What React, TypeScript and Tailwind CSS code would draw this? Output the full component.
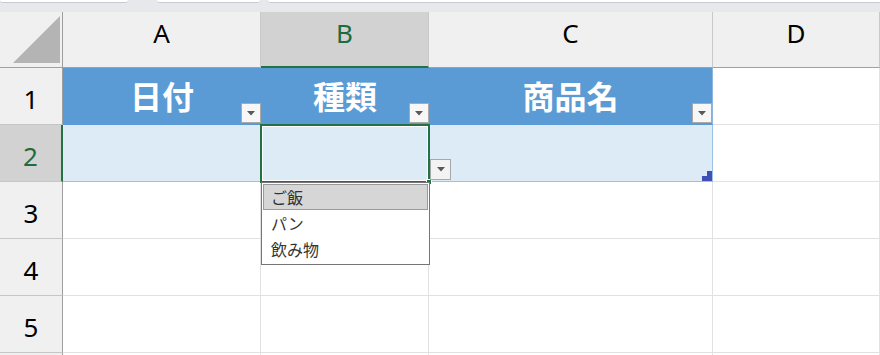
import React from "react";

const jp = '"Noto Sans CJK JP", "Noto Sans", sans-serif';
const latin = '"Noto Sans", "Liberation Sans", sans-serif';

function FilterButton({ className = "" }: { className?: string }) {
  return (
    <div
      className={`absolute w-[20px] h-[20px] bg-[#f7f7f7] border border-[#a9a9a9] flex items-center justify-center ${className}`}
    >
      <svg width="8" height="5" viewBox="0 0 8 5">
        <polygon points="0,0 8,0 4,4.5" fill="#595959" />
      </svg>
    </div>
  );
}

function ColHeader({ label, active = false }: { label: string; active?: boolean }) {
  return (
    <div
      className={`flex items-start justify-center pt-[2px] text-[26px] border-r border-[#c9c9c9] ${
        active
          ? "bg-[#d2d2d2] text-[#1e6b40] border-b-2 border-b-[#217346]"
          : "bg-[#f0f0f0] text-black border-b border-b-[#a0a0a0]"
      }`}
      style={{ fontFamily: latin }}
    >
      {label}
    </div>
  );
}

function RowHeader({ n, active = false }: { n?: number; active?: boolean }) {
  return (
    <div
      className={`flex items-center justify-center pt-[6px] text-[26px] border-b border-b-[#c6c6c6] ${
        active
          ? "bg-[#d2d2d2] text-[#1e6b40] border-r-2 border-r-[#217346]"
          : "bg-[#f0f0f0] text-black border-r border-r-[#9e9e9e]"
      }`}
      style={{ fontFamily: latin }}
    >
      {n}
    </div>
  );
}

function Blank() {
  return <div className="bg-white border-r border-b border-[#e1e1e1]" />;
}

function TitleCell({ text, last = false }: { text: string; last?: boolean }) {
  return (
    <div
      className={`relative bg-[#5b9bd5] flex items-center justify-center text-white font-bold text-[32px] border-b border-b-[#5b9bd5] ${
        last ? "border-r border-r-[#8fb6e0]" : ""
      }`}
      style={{ fontFamily: jp }}
    >
      <span className="-mt-[3px]">{text}</span>
      <FilterButton className="right-0 bottom-[1px]" />
    </div>
  );
}

const options = ["ご飯", "パン", "飲み物"];

export default function App() {
  return (
    <div className="w-[880px] h-[355px] overflow-hidden bg-white" style={{ fontFamily: jp }}>
      {/* タブ帯 */}
      <div className="h-[12px] bg-[#e6e8ec] flex gap-[8px] items-start">
        <div className="w-[128px] h-[3px] bg-white rounded-b-[3px] border-b border-[#c9cbd0]" />
        <div className="w-[103px] h-[3px] ml-[21px] bg-white rounded-b-[3px] border-b border-[#c9cbd0]" />
        <div className="flex-1 h-[3px] bg-white rounded-bl-[3px] border-b border-[#c9cbd0]" />
      </div>

      <div className="grid grid-cols-[63px_198px_168px_284px_167px] grid-rows-[56px_57px_57px_57px_57px_57px]">
        {/* 見出し行 */}
        <div className="relative bg-[#f0f0f0] border-r border-r-[#9e9e9e] border-b border-b-[#a0a0a0]">
          <svg className="absolute left-0 top-0" width="62" height="55" viewBox="0 0 62 55">
            <polygon points="13,51 60,51 60,4" fill="#b4b4b4" />
          </svg>
        </div>
        <ColHeader label="A" />
        <ColHeader label="B" active />
        <ColHeader label="C" />
        <ColHeader label="D" />

        {/* 1 */}
        <RowHeader n={1} />
        <TitleCell text="日付" />
        <TitleCell text="種類" />
        <TitleCell text="商品名" last />
        <Blank />

        {/* 2 */}
        <RowHeader n={2} active />
        <div className="bg-[#ddebf7] border-b border-b-[#9bc2e6]" />
        <div className="relative bg-[#ddebf7] border-b border-b-[#9bc2e6]">
          {/* 選択枠 */}
          <div className="absolute -left-[1px] -top-[1px] w-[170px] h-[59px] border-2 border-[#217346] z-10">
            <div className="w-full h-full border border-white" />
            <div className="absolute -right-[4px] -bottom-[4px] w-[6px] h-[6px] bg-[#217346] border border-white" />
          </div>
          {/* 入力規則ボタン */}
          <div className="absolute left-[169px] top-[34px] w-[21px] h-[21px] bg-[#f3f3f3] border border-[#a8a8a8] flex items-center justify-center z-10">
            <svg width="8" height="5" viewBox="0 0 8 5">
              <polygon points="0,0 8,0 4,4.5" fill="#595959" />
            </svg>
          </div>
          {/* リスト */}
          <div className="absolute left-0 top-[57px] w-[169px] h-[83px] bg-white border border-[#767676] z-20 flex flex-col p-[1px] text-[16px] text-[#333]">
            {options.map((o, i) => (
              <div
                key={o}
                className={`h-[26px] flex items-center pl-[7px] leading-none ${
                  i === 0 ? "bg-[#d6d6d6] border border-[#9a9a9a]" : "border border-transparent"
                }`}
              >
                {o}
              </div>
            ))}
          </div>
        </div>
        <div className="relative bg-[#ddebf7] border-b border-b-[#9bc2e6] border-r border-r-[#9bc2e6]">
          <svg className="absolute right-0 bottom-0" width="10" height="10" viewBox="0 0 10 10">
            <rect x="5" y="0" width="5" height="10" fill="#3f51b5" />
            <rect x="0" y="5" width="10" height="5" fill="#3f51b5" />
          </svg>
        </div>
        <Blank />

        {[3, 4, 5].map((n) => (
          <React.Fragment key={n}>
            <RowHeader n={n} />
            <Blank />
            <Blank />
            <Blank />
            <Blank />
          </React.Fragment>
        ))}
        {/* 6行目（見切れ） */}
        <RowHeader />
        <Blank />
        <Blank />
        <Blank />
        <Blank />
      </div>
    </div>
  );
}
